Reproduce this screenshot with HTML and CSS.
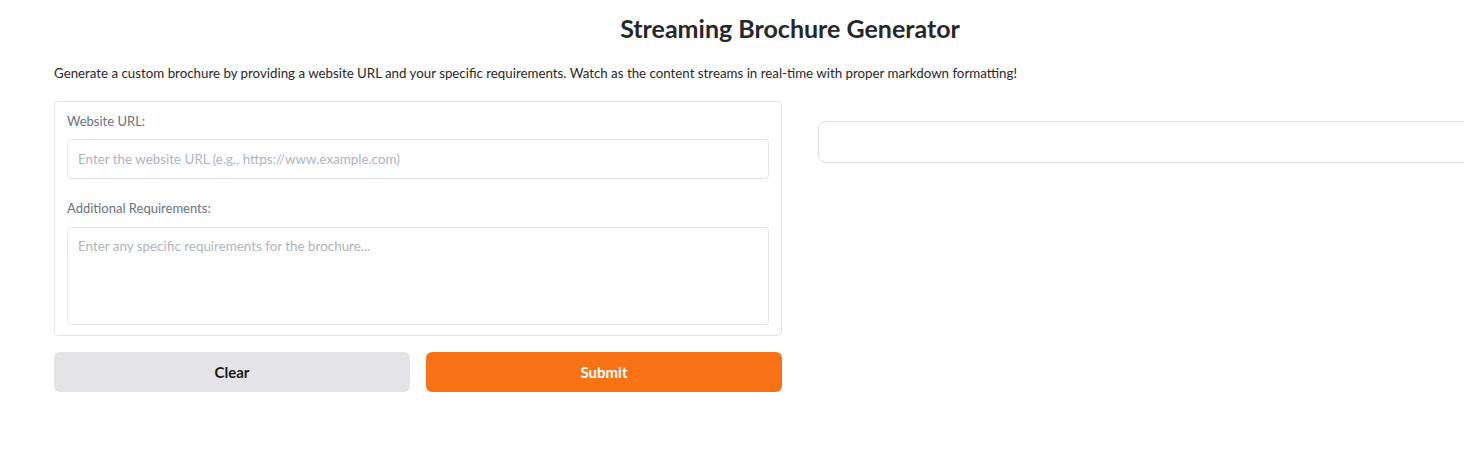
FILE: index.html
```html
<!DOCTYPE html>
<html>
<head>
<meta charset="utf-8">
<link rel="stylesheet" href="styles.css">
</head>
<body>
<div class="app">
  <h1 class="title">Streaming Brochure Generator</h1>
  <p class="desc">Generate a custom brochure by providing a website URL and your specific requirements. Watch as the content streams in real-time with proper markdown formatting!</p>
  <div class="row">
    <div class="col-left">
      <div class="form">
        <label class="field">
          <span class="label">Website URL:</span>
          <input class="input" type="text" placeholder="Enter the website URL (e.g., https://www.example.com)">
        </label>
        <label class="field field-area">
          <span class="label">Additional Requirements:</span>
          <textarea class="input area" placeholder="Enter any specific requirements for the brochure..."></textarea>
        </label>
      </div>
      <div class="buttons">
        <button class="btn btn-secondary">Clear</button>
        <button class="btn btn-primary">Submit</button>
      </div>
    </div>
    <div class="col-right">
      <div class="output"></div>
    </div>
  </div>
</div>
</body>
</html>
```
FILE: styles.css
```css
* { box-sizing: border-box; }
html, body { margin: 0; padding: 0; background: #fff; overflow: hidden; }
body { font-family: "Lato", "Open Sans", sans-serif; color: #27272a; }
.app { width: 1472px; margin-left: 54px; padding-top: 12px; }
.title { margin: 0; text-align: center; font-size: 25px; font-weight: 700; line-height: 32px; color: #27272a; }
.desc { margin: 21px 0 0; font-size: 13.3px; line-height: 16px; color: #27272a; }
.row { display: flex; gap: 36px; margin-top: 20px; align-items: flex-start; }
.col-left { width: 728px; flex: none; }
.col-right { flex: 1; padding-top: 20px; }
.form { border: 1px solid #e4e4e7; border-radius: 4px; padding: 11px 12px 10px; display: flex; flex-direction: column; gap: 21px; }
.field { display: flex; flex-direction: column; gap: 10px; }
.field-area { gap: 11px; }
.label { font-size: 13px; line-height: 16px; color: #6b7280; }
.input { width: 100%; height: 40px; border: 1px solid #e4e4e7; border-radius: 4px; padding: 10px 10px; font-family: inherit; font-size: 13.4px; color: #27272a; outline: none; resize: none; display: block; }
.input::placeholder { color: #b0b4bc; }
.area { height: 98px; }
.buttons { display: flex; gap: 16px; margin-top: 16px; }
.btn { flex: 1; height: 40px; border: none; border-radius: 6px; font-family: inherit; font-weight: 700; font-size: 15px; }
.btn-secondary { background: #e4e4e7; color: #18181b; }
.btn-primary { background: #f97316; color: #fff; }
.output { height: 42px; border: 1px solid #e0e0e0; border-radius: 8px; }
```
